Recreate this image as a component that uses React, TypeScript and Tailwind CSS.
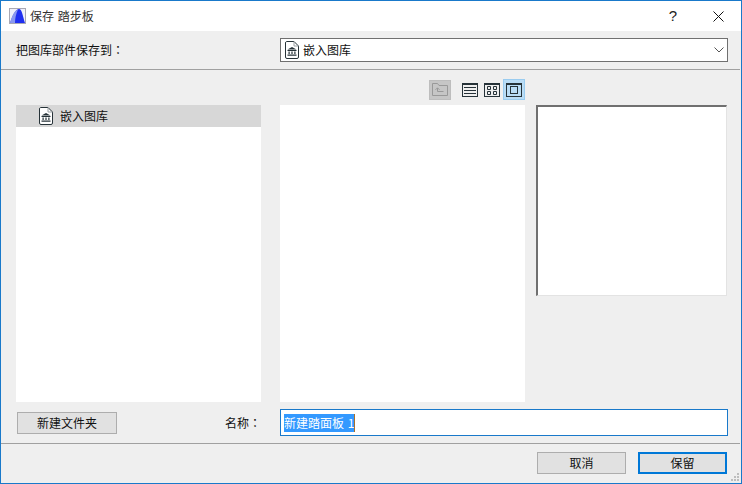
import React from "react";

function LibIcon({ className = "" }: { className?: string }) {
  return (
    <svg width="14" height="18" viewBox="0 0 14 18" className={className} fill="none">
      <path d="M1.5.5H9L13.5 5V16a1.5 1.5 0 0 1-1.5 1.5H2A1.5 1.5 0 0 1 .5 16V2A1.5 1.5 0 0 1 1.5.5Z" stroke="#263238" fill="#fff" />
      <path d="M9 .5V5h4.5" stroke="#9aa0a4" />
      <path d="M7 6 11.5 8.5h-9Z" fill="#263238" />
      <path d="M2.5 9h9v1h-9ZM3.5 10.5h1.2v2.5H3.5ZM6.4 10.5h1.2v2.5H6.4ZM9.3 10.5h1.2v2.5H9.3ZM2.5 13.5h9v1.2h-9Z" fill="#263238" />
    </svg>
  );
}

function WinIcon({ children }: { children: React.ReactNode }) {
  return (
    <svg width="16" height="14" viewBox="0 0 16 14" fill="none">
      <rect x="0.5" y="0.5" width="15" height="13" stroke="#263238" fill="none" />
      <rect x="0" y="0" width="16" height="2" fill="#263238" />
      {children}
    </svg>
  );
}

function Colon() {
  return <span className="font-['Noto_Sans_CJK_TC',sans-serif]">：</span>;
}

export default function App() {
  return (
    <div className="w-[742px] h-[484px] border border-[#1979ca] bg-[#efefef] flex flex-col text-[12px] leading-[16px] text-[#111] font-['Noto_Sans_CJK_SC','Liberation_Sans',sans-serif] relative overflow-hidden">
      {/* title bar */}
      <div className="h-[30px] bg-white flex items-center shrink-0">
        <svg width="18" height="17" viewBox="0 0 18 17" className="ml-[8px]">
          <rect x="0.5" y="0.5" width="16" height="15" fill="#eef0fa" stroke="#a8a8b4" />
          <path d="M1 15 C4 6 7 1 10 1 C13 1 14 9 16 15Z" fill="#1f2ff0" />
          <path d="M1 15 C3 8 5 3 9 1.5 C7 6 6 10 6 15Z" fill="#8a98f0" />
        </svg>
        <span className="ml-[3px] text-[#333] [word-spacing:1px]">保存 踏步板</span>
        <span className="ml-auto mr-[36px] text-[15px] text-[#222] font-['Liberation_Sans',sans-serif]">?</span>
        <svg width="11" height="11" viewBox="0 0 11 11" className="mr-[17px]" stroke="#111" strokeWidth="1">
          <path d="M.5.5l10 10M10.5.5l-10 10" />
        </svg>
      </div>

      {/* save-to row */}
      <div className="h-[38px] flex items-center shrink-0">
        <span className="ml-[15px] w-[264px]">把图库部件保存到<Colon /></span>
        <div className="w-[448px] h-[24px] border border-[#707070] bg-white flex items-center">
          <LibIcon className="ml-[4px]" />
          <span className="ml-[4px]">嵌入图库</span>
          <svg width="10" height="6" viewBox="0 0 10 6" className="ml-auto mr-[3px]" fill="none" stroke="#555">
            <path d="M.5.5 5 5 9.5.5" />
          </svg>
        </div>
      </div>
      <div className="h-px bg-[#a0a0a0] shrink-0 mr-[1px]" />

      {/* toolbar */}
      <div className="flex items-center h-[21px] mt-[9px] pl-[428px] shrink-0">
        <div className="w-[22px] h-[20px] bg-[#c6c6c6] border border-[#bdbdbd] flex items-center justify-center">
          <svg width="16" height="13" viewBox="0 0 16 13" fill="none" stroke="#999">
            <path d="M.5 12.5V.5h5l1.5 2h8.5v10Z" />
            <path d="M5.5 5v3.5h6M3.5 6.8l2-2 2 2" />
          </svg>
        </div>
        <div className="ml-[11px]">
          <WinIcon>
            <path d="M2 4.5h12M2 7.5h12M2 10.5h12" stroke="#263238" />
          </WinIcon>
        </div>
        <div className="ml-[6px]">
          <WinIcon>
            <path d="M3.5 3.5h3v3h-3ZM9.5 3.5h3v3h-3ZM3.5 8.5h3v3h-3ZM9.5 8.5h3v3h-3Z" stroke="#263238" />
          </WinIcon>
        </div>
        <div className="ml-[3px] w-[22px] h-[21px] bg-[#b9dcf5] border border-[#9accf0] flex items-center justify-center">
          <WinIcon>
            <rect x="4.5" y="3.5" width="7" height="7" stroke="#263238" />
          </WinIcon>
        </div>
      </div>

      {/* panels */}
      <div className="flex items-start h-[297px] mt-[5px] pl-[15px] shrink-0">
        <div className="w-[245px] h-full bg-white">
          <div className="h-[22px] bg-[#d7d7d7] flex items-center pl-[23px]">
            <LibIcon />
            <span className="ml-[7px]">嵌入图库</span>
          </div>
        </div>
        <div className="w-[245px] h-full bg-white ml-[19px]" />
        <div className="w-[191px] h-[191px] bg-white ml-[11px] border-t-2 border-l-2 border-t-[#707070] border-l-[#707070] border-r border-b border-r-[#e3e3e3] border-b-[#e3e3e3]" />
      </div>

      {/* name row */}
      <div className="flex items-center h-[27px] mt-[7px] shrink-0">
        <button className="ml-[16px] w-[100px] h-[22px] bg-[#e1e1e1] border border-[#adadad] text-[12px] leading-none">新建文件夹</button>
        <span className="ml-[108px] w-[55px]">名称<Colon /></span>
        <div className="w-[448px] h-[27px] border border-[#1979ca] bg-white flex items-center pl-[3px]">
          <span className="bg-[#3399ff] text-white h-[18px] leading-[18px] [word-spacing:1px] border-r border-r-[#a8702c]">新建踏面板 1</span>
        </div>
      </div>

      {/* footer */}
      <div className="h-px bg-[#a0a0a0] mt-[7px] shrink-0 mr-[1px]" />
      <div className="flex items-center justify-end flex-1 pr-[14px] gap-[12px] pb-[1px]">
        <button className="w-[89px] h-[22px] bg-[#e1e1e1] border border-[#adadad] text-[12px] leading-none">取消</button>
        <button className="w-[89px] h-[22px] bg-[#e1e1e1] border-2 border-[#0078d7] text-[12px] leading-none">保留</button>
      </div>

      {/* resize grip */}
      <svg width="9" height="9" viewBox="0 0 9 9" className="absolute right-[1px] bottom-[1px]" fill="#bdbdbd">
        <rect x="6" y="0" width="2" height="2" />
        <rect x="3" y="3" width="2" height="2" />
        <rect x="6" y="3" width="2" height="2" />
        <rect x="0" y="6" width="2" height="2" />
        <rect x="3" y="6" width="2" height="2" />
        <rect x="6" y="6" width="2" height="2" />
      </svg>
    </div>
  );
}
